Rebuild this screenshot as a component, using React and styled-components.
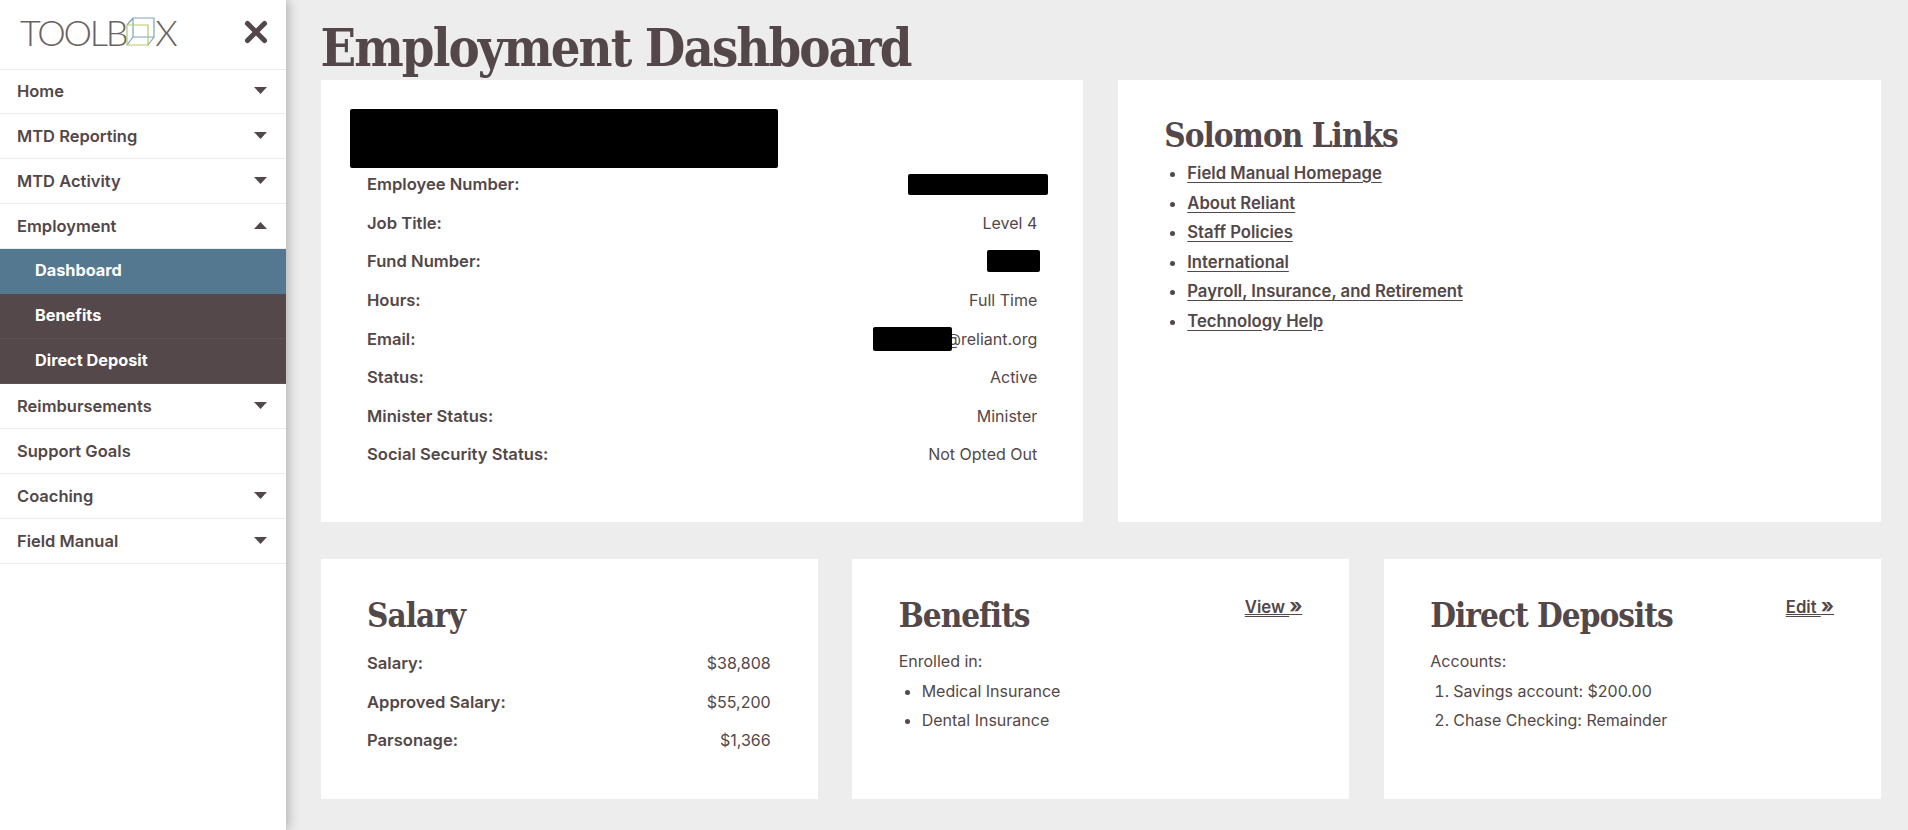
import React from "react";
import styled, { createGlobalStyle } from "styled-components";
import { X } from "lucide-react";

const ink = "#534749";
const serif = `"DejaVu Serif Condensed", "DejaVu Serif", serif`;
const sans = `Inter, "Liberation Sans", sans-serif`;

const Global = createGlobalStyle`
  html, body { margin: 0; padding: 0; background: #ededed; }
  body { font-family: ${sans}; color: ${ink}; }
  * { box-sizing: border-box; }
  h1, h2, ul, ol, p { margin: 0; padding: 0; }
`;

const Page = styled.div`
  display: flex;
  width: 1908px;
  height: 830px;
  overflow: hidden;
  background: #ededed;
`;
const Sidebar = styled.nav`
  flex: 0 0 286px;
  background: #fff;
  box-shadow: 3px 0 10px rgba(0, 0, 0, 0.24);
  z-index: 1;
`;
const Brand = styled.div`
  display: flex;
  align-items: center;
  justify-content: space-between;
  height: 70px;
  margin-bottom: -1px;
  padding: 0 13px 5px 20px;
  border-bottom: 1px solid #ececec;
`;
const Logo = styled.div`
  display: flex;
  align-items: center;
  font-family: Lato, sans-serif;
  font-weight: 300;
  font-size: 36px;
  letter-spacing: -2.2px;
  color: #6b6163;
  line-height: 1;
`;
const NavRow = styled.div`
  display: flex;
  align-items: center;
  justify-content: space-between;
  height: 45px;
  padding: 0 19px 1px 17px;
  border-bottom: 1px solid #ececec;
  font-size: 16.5px;
  font-weight: 600;
  color: ${ink};
`;
const SubRow = styled.div`
  display: flex;
  align-items: center;
  height: 45px;
  padding: 0 0 3px 35px;
  font-size: 16.3px;
  font-weight: 700;
  color: #fff;
  background: ${(p) => (p.$active ? "#557891" : "#54484b")};
  border-bottom: 1px solid ${(p) => (p.$active ? "#557891" : "#5e5255")};
`;
const Main = styled.main`
  flex: 1;
  padding: 0 27px 0 34.5px;
`;
const Title = styled.h1`
  height: 80px;
  padding-top: 16px;
  font-family: ${serif};
  font-size: 52px;
  line-height: 64px;
  font-weight: 700;
  letter-spacing: -1.9px;
  color: ${ink};
  white-space: nowrap;
`;
const TopGrid = styled.div`
  display: grid;
  grid-template-columns: 1fr 1fr;
  gap: 35px;
  margin-bottom: 37px;
`;
const BottomGrid = styled.div`
  display: grid;
  grid-template-columns: repeat(3, 1fr);
  gap: 34.5px;
`;
const Card = styled.section`
  background: #fff;
  height: ${(p) => p.$h}px;
  padding: ${(p) => p.$pad};
`;
const NameBlock = styled.div`
  width: 428px;
  height: 59px;
  margin: 0 0 -3px -17px;
  background: #000;
  border-radius: 2px;
`;
const Row = styled.div`
  display: flex;
  align-items: center;
  justify-content: space-between;
  height: 38.6px;
  font-size: 16px;
`;
const Label = styled.span`
  font-size: 16.6px;
  font-weight: 600;
`;
const Value = styled.span`
  display: flex;
  align-items: center;
  font-weight: 400;
`;
const Redact = styled.span`
  display: block;
  position: relative;
  width: ${(p) => p.$w}px;
  height: ${(p) => p.$h}px;
  margin-right: ${(p) => p.$mr}px;
  background: #000;
  border-radius: 2px;
`;
const CardTitle = styled.h2`
  font-family: ${serif};
  font-size: 33px;
  line-height: 42px;
  font-weight: 700;
  letter-spacing: -1px;
  color: ${ink};
  white-space: nowrap;
`;
const Links = styled.ul`
  margin-top: 2px;
  padding-left: 23px;
  font-size: 16.7px;
  font-weight: 600;
  line-height: 29.5px;
`;
const Link = styled.a`
  color: ${ink};
  text-decoration: underline;
  text-underline-offset: 3px;
`;
const HeadRow = styled.div`
  display: flex;
  justify-content: space-between;
  align-items: flex-start;
  margin-bottom: 7px;
`;
const More = styled.a`
  margin-top: 0;
  font-size: 16.7px;
  font-weight: 600;
  line-height: 24px;
  white-space: nowrap;
  color: ${ink};
`;
const MoreText = styled.span`
  text-decoration: underline;
  text-underline-offset: 3px;
`;
const Arrows = styled.span`
  font-size: 20px;
  font-weight: 700;
  line-height: 1;
`;
const Body = styled.div`
  margin-top: 10px;
  font-size: 16px;
  line-height: 29.5px;
`;
const Bullets = styled.ul`
  padding-left: 23px;
`;
const Numbers = styled.ol`
  padding-left: 23px;
`;

const Caret = ({ up }) => (
  <svg width="13" height="7" viewBox="0 0 13 7" aria-hidden="true">
    <path d={up ? "M0 7 L6.5 0 L13 7 Z" : "M0 0 H13 L6.5 7 Z"} fill={ink} />
  </svg>
);

const Cube = () => (
  <svg width="29" height="30" viewBox="0 0 29 30" fill="none" strokeWidth="1.2" aria-hidden="true">
    <path d="M7 1 H28 V20 H7 Z M1 8 L7 1 M22 28 L28 20 M1 28 L7 20" stroke="#7fa3bd" />
    <path d="M1 8 H22 V28 H1 Z" stroke="#b4c968" />
  </svg>
);

const nav = [
  ["Home", true],
  ["MTD Reporting", true],
  ["MTD Activity", true],
];
const nav2 = [
  ["Reimbursements", true],
  ["Support Goals", false],
  ["Coaching", true],
  ["Field Manual", true],
];
const links = [
  "Field Manual Homepage",
  "About Reliant",
  "Staff Policies",
  "International",
  "Payroll, Insurance, and Retirement",
  "Technology Help",
];

export default function App() {
  return (
    <Page>
      <Global />
      <Sidebar>
        <Brand>
          <Logo>
            TOOLB
            <Cube />X
          </Logo>
          <X size={34} strokeWidth={3.6} color={ink} />
        </Brand>
        {nav.map(([t, c]) => (
          <NavRow key={t}>
            {t}
            {c && <Caret />}
          </NavRow>
        ))}
        <NavRow>
          Employment
          <Caret up />
        </NavRow>
        <SubRow $active>Dashboard</SubRow>
        <SubRow>Benefits</SubRow>
        <SubRow>Direct Deposit</SubRow>
        {nav2.map(([t, c]) => (
          <NavRow key={t}>
            {t}
            {c && <Caret />}
          </NavRow>
        ))}
      </Sidebar>
      <Main>
        <Title>Employment Dashboard</Title>
        <TopGrid>
          <Card $h={442} $pad="29px 46px 0 46.5px">
            <NameBlock />
            <Row>
              <Label>Employee Number:</Label>
              <Value>
                <Redact $w={140} $h={21} $mr={-11} />
              </Value>
            </Row>
            <Row>
              <Label>Job Title:</Label>
              <Value>Level 4</Value>
            </Row>
            <Row>
              <Label>Fund Number:</Label>
              <Value>
                <Redact $w={53} $h={22} $mr={-3} />
              </Value>
            </Row>
            <Row>
              <Label>Hours:</Label>
              <Value>Full Time</Value>
            </Row>
            <Row>
              <Label>Email:</Label>
              <Value>
                <Redact $w={79} $h={24} $mr={-6} />
                @reliant.org
              </Value>
            </Row>
            <Row>
              <Label>Status:</Label>
              <Value>Active</Value>
            </Row>
            <Row>
              <Label>Minister Status:</Label>
              <Value>Minister</Value>
            </Row>
            <Row>
              <Label>Social Security Status:</Label>
              <Value>Not Opted Out</Value>
            </Row>
          </Card>
          <Card $h={442} $pad="35px 46px 0 46px">
            <CardTitle>Solomon Links</CardTitle>
            <Links>
              {links.map((l) => (
                <li key={l}>
                  <Link href="#">{l}</Link>
                </li>
              ))}
            </Links>
          </Card>
        </TopGrid>
        <BottomGrid>
          <Card $h={240} $pad="36px 47px 0 46.5px">
            <HeadRow>
              <CardTitle>Salary</CardTitle>
            </HeadRow>
            <Row>
              <Label>Salary:</Label>
              <Value>$38,808</Value>
            </Row>
            <Row>
              <Label>Approved Salary:</Label>
              <Value>$55,200</Value>
            </Row>
            <Row>
              <Label>Parsonage:</Label>
              <Value>$1,366</Value>
            </Row>
          </Card>
          <Card $h={240} $pad="36px 47px 0 46.5px">
            <HeadRow>
              <CardTitle>Benefits</CardTitle>
              <More href="#">
                <MoreText>View </MoreText>
                <Arrows>»</Arrows>
              </More>
            </HeadRow>
            <Body>
              <p>Enrolled in:</p>
              <Bullets>
                <li>Medical Insurance</li>
                <li>Dental Insurance</li>
              </Bullets>
            </Body>
          </Card>
          <Card $h={240} $pad="36px 47px 0 46.5px">
            <HeadRow>
              <CardTitle>Direct Deposits</CardTitle>
              <More href="#">
                <MoreText>Edit </MoreText>
                <Arrows>»</Arrows>
              </More>
            </HeadRow>
            <Body>
              <p>Accounts:</p>
              <Numbers>
                <li>Savings account: $200.00</li>
                <li>Chase Checking: Remainder</li>
              </Numbers>
            </Body>
          </Card>
        </BottomGrid>
      </Main>
    </Page>
  );
}
